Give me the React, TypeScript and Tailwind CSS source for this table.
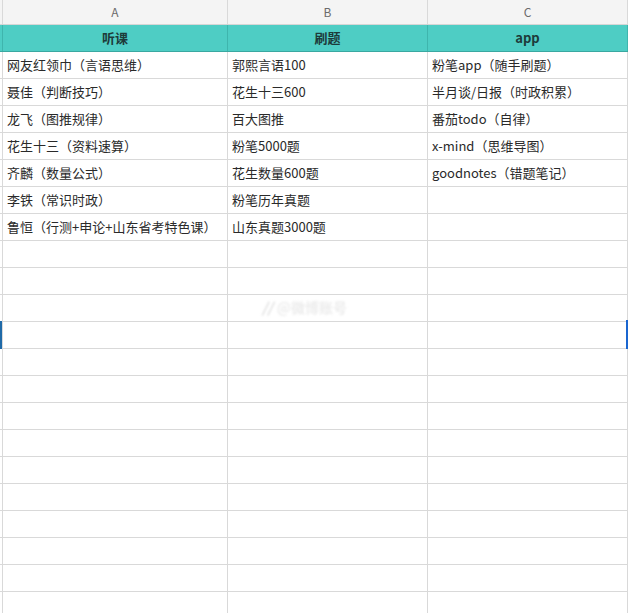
import React from "react";

const rows: [string, string, string][] = [
  ["网友红领巾（言语思维）", "郭熙言语100", "粉笔app（随手刷题）"],
  ["聂佳（判断技巧）", "花生十三600", "半月谈/日报（时政积累）"],
  ["龙飞（图推规律）", "百大图推", "番茄todo（自律）"],
  ["花生十三（资料速算）", "粉笔5000题", "x-mind（思维导图）"],
  ["齐麟（数量公式）", "花生数量600题", "goodnotes（错题笔记）"],
  ["李铁（常识时政）", "粉笔历年真题", ""],
  ["鲁恒（行测+申论+山东省考特色课）", "山东真题3000题", ""],
];

const empty = 14;

export default function App() {
  const font = { fontFamily: '"Noto Sans CJK SC", "Noto Sans", sans-serif' };
  const all: [string, string, string][] = [...rows, ...Array.from({ length: empty }, () => ["", "", ""] as [string, string, string])];
  return (
    <div className="relative w-[628px] h-[613px] overflow-hidden bg-white" style={font}>
      <div className="flex h-[25px] pl-[2px] bg-[#f4f4f4] border-b border-[#d6d6d6] text-[12px] text-[#6b6b6b]">
        <div className="w-[226px] border-l border-r border-[#d9d9d9] flex items-center justify-center">A</div>
        <div className="w-[200px] border-r border-[#d9d9d9] flex items-center justify-center">B</div>
        <div className="w-[200px] border-r border-[#d9d9d9] flex items-center justify-center">C</div>
      </div>
      <div className="flex h-[27px] pl-[2px] bg-[#4ecdc4] border-b border-[#3aa8a1] text-[13px] font-bold text-[#1d3b3a]">
        <div className="w-[226px] border-l border-r border-[#3fb5ad] flex items-center justify-center">听课</div>
        <div className="w-[200px] border-r border-[#3fb5ad] flex items-center justify-center">刷题</div>
        <div className="w-[200px] border-r border-[#3fb5ad] flex items-center justify-center">app</div>
      </div>
      {all.map((r, i) => (
        <div key={i} className="flex h-[27px] pl-[2px] border-b border-[#d9d9d9] text-[13px] text-[#2a2a2a]">
          <div className="w-[226px] border-l border-r border-[#d9d9d9] flex items-center pl-[4px] whitespace-nowrap overflow-hidden">{r[0]}</div>
          <div className="w-[200px] border-r border-[#d9d9d9] flex items-center pl-[4px] whitespace-nowrap overflow-hidden">{r[1]}</div>
          <div className="w-[200px] border-r border-[#d9d9d9] flex items-center pl-[4px] whitespace-nowrap overflow-hidden">{r[2]}</div>
        </div>
      ))}
      <div className="absolute left-0 top-[321px] w-[2px] h-[28px] bg-[#1f6aa8]" />
      <div className="absolute left-[626px] top-[320px] w-[2px] h-[29px] bg-[#1a66d0]" />
      <div className="absolute left-[262px] top-[297px] flex items-center gap-[4px] text-[14px] font-bold text-[#ececec] blur-[1px]">
        <span className="italic text-[#dcdcdc]">//</span>
        <span>@微博账号</span>
      </div>
    </div>
  );
}
